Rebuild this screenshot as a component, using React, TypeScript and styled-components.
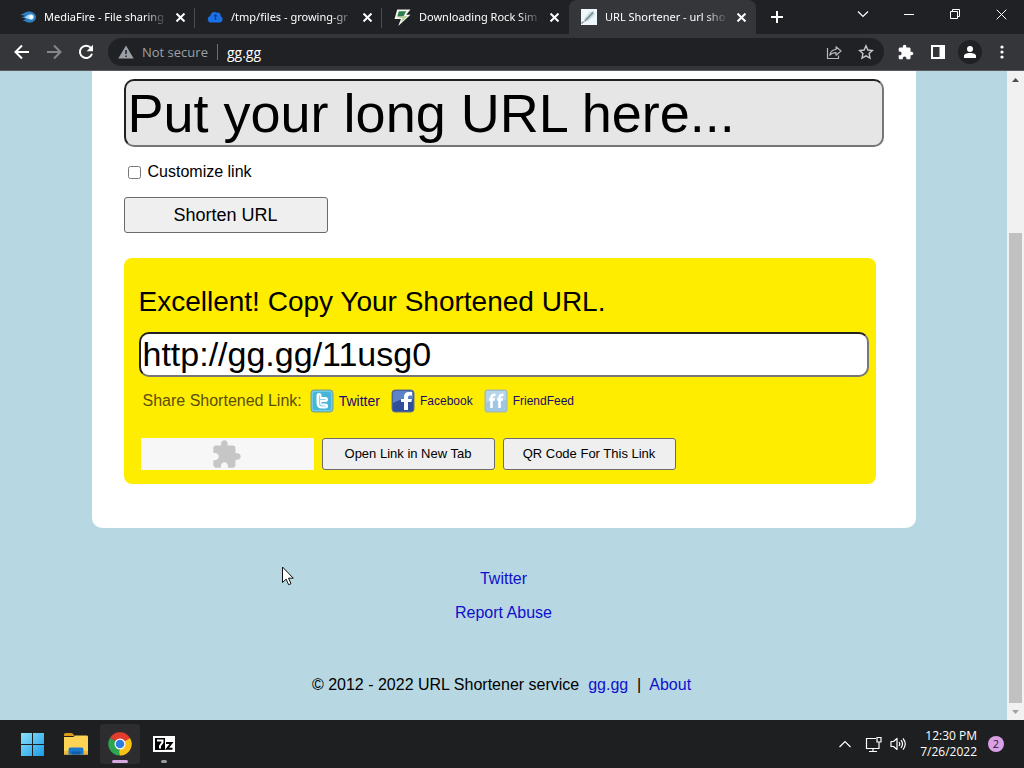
import React from "react";
import styled, { createGlobalStyle } from "styled-components";

const GlobalStyle = createGlobalStyle`
  *, *::before, *::after { box-sizing: border-box; }
  body { margin: 0; background: #b7d7e3; }
  button { font: inherit; color: inherit; }
`;

const uiFont = `"Open Sans", "Noto Sans", sans-serif`;
const tabFont = `"Noto Sans", "Open Sans", sans-serif`;
const pageFont = `"Liberation Sans", Arial, sans-serif`;

const Screen = styled.div`
  min-height: 100vh;
  display: flex;
  flex-direction: column;
  font-family: ${uiFont};
`;

/* ---------- Browser chrome ---------- */

const TabStrip = styled.div`
  display: flex;
  height: 34px;
  padding-left: 8px;
  background: #202124;
  color: #fff;
`;

const Tab = styled.div<{ $active?: boolean; $divider?: boolean }>`
  position: relative;
  flex: 0 1 187px;
  min-width: 0;
  display: flex;
  align-items: center;
  gap: 8px;
  padding: 0 7px 0 12px;
  border-radius: 8px 8px 0 0;
  background: ${(p) => (p.$active ? "#35363a" : "transparent")};

  &::after {
    content: "";
    display: ${(p) => (p.$divider ? "block" : "none")};
    position: absolute;
    right: 0;
    top: 8px;
    width: 1px;
    height: 20px;
    background: #4a4c50;
  }
`;

const TabTitle = styled.span`
  flex: 1;
  min-width: 0;
  overflow: hidden;
  white-space: nowrap;
  font-family: ${tabFont};
  font-size: 11px;
  line-height: 18px;
  mask-image: linear-gradient(to right, #000 calc(100% - 20px), rgba(0, 0, 0, 0.15));
`;

const IconButton = styled.button<{ $size?: number; $round?: boolean }>`
  flex: none;
  display: grid;
  place-items: center;
  width: ${(p) => p.$size ?? 24}px;
  height: ${(p) => p.$size ?? 24}px;
  padding: 0;
  border: 0;
  border-radius: ${(p) => (p.$round ? "50%" : "0")};
  background: ${(p) => (p.$round ? "#202124" : "transparent")};
`;

const NewTab = styled(IconButton)`
  margin: 5px 0 0 9px;
`;

const WindowButtons = styled.div`
  display: flex;
  margin-left: auto;
`;

const WindowButton = styled.button`
  width: 46px;
  height: 28px;
  padding: 0;
  border: 0;
  background: transparent;
  display: grid;
  place-items: center;
`;

const Toolbar = styled.div`
  display: flex;
  align-items: center;
  gap: 8px;
  height: 37px;
  padding: 0 10px;
  background: #35363a;
  border-bottom: 1px solid #5a5a5e;
`;

const Omnibox = styled.div`
  flex: 1;
  min-width: 0;
  display: flex;
  align-items: center;
  height: 28px;
  margin: 0 2px;
  padding: 0 6px 0 10px;
  border-radius: 14px;
  background: #202124;
  color: #9aa0a6;
  font-size: 13px;
`;

const Security = styled.span`
  display: flex;
  align-items: center;
  gap: 8px;
  padding-right: 9px;
  border-right: 1px solid #6b6d71;
  line-height: 16px;
  white-space: nowrap;
`;

const Address = styled.input`
  flex: 1;
  min-width: 0;
  padding: 0 0 0 9px;
  border: 0;
  outline: 0;
  background: transparent;
  color: #fff;
  font: 14px ${uiFont};
`;

const OmniboxActions = styled.div`
  display: flex;
  gap: 8px;
`;

/* ---------- Web page ---------- */

const Viewport = styled.div`
  position: relative;
  flex: 1;
  display: flex;
`;

const Page = styled.main`
  flex: 1;
  min-width: 0;
  background: #b7d7e3;
  color: #000;
  font: 16px/18px ${pageFont};
`;

const Card = styled.section`
  max-width: 824px;
  margin: 0 auto;
  padding: 8px 32px 44px;
  border-radius: 0 0 10px 10px;
  background: #fff;
`;

const TextField = styled.input<{ $large?: boolean }>`
  display: block;
  width: 100%;
  padding: 1px 2px;
  border: 2px inset #767676;
  border-radius: 10px;
  background: ${(p) => (p.$large ? "#e6e6e6" : "#fff")};
  color: #000;
  outline: 0;
  font: ${(p) => (p.$large ? 54 : 34)}px ${pageFont};

  &::placeholder { color: #000; opacity: 1; }
`;

const CheckRow = styled.label`
  display: flex;
  align-items: center;
  gap: 7px;
  margin: 16px 0 16px 4px;
`;

const Checkbox = styled.input`
  width: 13px;
  height: 13px;
  margin: 0;
`;

const PushButton = styled.button<{ $primary?: boolean }>`
  width: ${(p) => (p.$primary ? 204 : 173)}px;
  height: ${(p) => (p.$primary ? 36 : 32)}px;
  padding: 0;
  border: 1px solid #6b6b6b;
  border-radius: 3px;
  background: #efefef;
  color: #000;
  font-size: ${(p) => (p.$primary ? 18 : 13)}px;
`;

const Result = styled.section`
  margin: 25px 8px 0 0;
  padding: 28px 7px 14px 15px;
  border-radius: 8px;
  background: #ffed00;
`;

const ResultTitle = styled.h2`
  margin: 0 0 14px;
  font-size: 28px;
  line-height: 32px;
  font-weight: 400;
`;

const ShareRow = styled.div`
  display: flex;
  align-items: center;
  margin: 12px 0 25px 4px;
  color: #5a4f0a;
`;

const ShareLink = styled.a<{ $big?: boolean }>`
  display: flex;
  align-items: center;
  gap: 5px;
  margin-left: ${(p) => (p.$big ? 8 : 11)}px;
  color: #1a0a6b;
  font-size: ${(p) => (p.$big ? 14 : 12)}px;
  text-decoration: none;
`;

const Actions = styled.div`
  display: flex;
  flex-wrap: wrap;
  gap: 8px;
  padding-left: 2px;
`;

const PluginSlot = styled.div`
  display: grid;
  place-items: center;
  width: 173px;
  height: 32px;
  background: #f7f7f7;
`;

const Footer = styled.footer`
  display: flex;
  flex-direction: column;
  align-items: center;
  gap: 16px;
  padding: 42px 0 26px;
`;

const Copyright = styled.p`
  margin: 38px 0 0;
  padding-right: 4px;
  white-space: pre-wrap;
`;

const PageLink = styled.a`
  color: #0f10cc;
  text-decoration: none;
`;

const ScrollTrack = styled.div`
  width: 17px;
  display: flex;
  flex-direction: column;
  align-items: center;
  background: #f1f1f1;
`;

const ScrollArrow = styled.button`
  display: grid;
  place-items: center;
  width: 17px;
  height: 17px;
  padding: 0;
  border: 0;
  background: transparent;
`;

const ScrollThumb = styled.div`
  flex: 470;
  width: 13px;
  background: #c1c1c1;
`;

const ScrollGap = styled.div`
  flex: 145;
`;

const Pointer = styled.svg`
  position: absolute;
  left: 281px;
  top: 495px;
`;

/* ---------- Taskbar ---------- */

const Taskbar = styled.footer`
  display: flex;
  align-items: center;
  height: 48px;
  padding: 0 20px 0 12px;
  background: #1e1f20;
  color: #fff;
`;

const Apps = styled.div`
  display: flex;
  gap: 4px;
`;

const AppButton = styled.button<{ $active?: boolean; $running?: boolean }>`
  position: relative;
  display: grid;
  place-items: center;
  width: 40px;
  height: 40px;
  padding: 0;
  border: 0;
  border-radius: 4px;
  background: ${(p) => (p.$active ? "#2d2d2f" : "transparent")};

  &::after {
    content: "";
    display: ${(p) => (p.$active || p.$running ? "block" : "none")};
    position: absolute;
    bottom: 1px;
    left: 50%;
    width: ${(p) => (p.$active ? 16 : 6)}px;
    height: 3px;
    border-radius: 2px;
    background: ${(p) => (p.$active ? "#d5a6e0" : "#9a9a9a")};
    transform: translateX(-50%);
  }
`;

const Tray = styled.div`
  display: flex;
  align-items: center;
  margin-left: auto;
`;

const TrayIcons = styled.div`
  display: flex;
  align-items: center;
  gap: 8px;
  margin-right: 13px;
`;

const Overflow = styled(IconButton)`
  width: 16px;
  margin-right: 4px;
`;

const Clock = styled.time`
  font-size: 12px;
  line-height: 16px;
  text-align: right;
  white-space: pre-line;
`;

const Badge = styled.span`
  display: grid;
  place-items: center;
  width: 16px;
  height: 16px;
  margin-left: 11px;
  border-radius: 50%;
  background: #d9a0e6;
  color: #2b1a30;
  font-size: 11px;
  line-height: 16px;
`;

/* ---------- Icons ---------- */

const CloseIcon = ({ size = 9, stroke = 2 }: { size?: number; stroke?: number }) => (
  <svg width={size} height={size} viewBox="0 0 8 8" fill="none" stroke="#fff" strokeWidth={(stroke * 8) / size}>
    <path d="M.5.5l7 7M7.5.5l-7 7" />
  </svg>
);

const MediaFireIcon = () => (
  <svg width="16" height="16" viewBox="0 0 16 16">
    <path d="M0 5.200C3 5.600 4.600 2.400 9 2.400c4 0 7 2.500 7 5.700s-2.800 5.600-6.600 5.600c-3.300 0-4.200-2.200-7.200-2.400 2.300-.5 3-.8 4-1.500C4.600 9 3 8.600.8 8.700 3 8 4 7.600 5 6.800 3.500 6.300 1.600 6 0 5.200z" fill="#2f7fc4" />
    <path d="M4 8.600C6.500 7.600 7.500 5.200 11 5.200a2.700 2.700 0 0 1 0 5.500C8.900 10.700 7.400 8.900 4 8.600z" fill="#a9dcf8" />
    <circle cx="11.300" cy="8" r="1.900" fill="#fff" />
  </svg>
);

const CloudIcon = () => (
  <svg width="16" height="16" viewBox="0 0 16 16">
    <path d="M4.300 13.500A3.300 3.300 0 0 1 3.300 7C3.500 4.500 5.300 3 7.500 3c1 0 1.700.2 2.400.7C12.500 3.200 13.800 5 13.800 7.200c2.500 1 2.400 6.300-1.100 6.300z" fill="#1a70e6" />
    <path d="M8.500 6v5M7.300 7.300L8.500 6l1.200 1.300" stroke="#0d3c94" strokeWidth="1.300" fill="none" />
  </svg>
);

const BoltIcon = () => (
  <svg width="17" height="17" viewBox="0 0 16 16">
    <path d="M3 .5H15.500L11.500 5.500H15.500L4 16 6.500 9.500H.5z" fill="#f4f7ee" />
    <path d="M4.600 2H11.500L8.800 7H3z" fill="#2e7d4c" />
    <path d="M9 6.500h4L6 13 8 8.500H3z" fill="#b7d39a" />
  </svg>
);

const LinkPageIcon = () => (
  <svg width="16" height="16" viewBox="0 0 16 16">
    <rect width="16" height="16" fill="#eef7fb" />
    <path d="M3 10l6-7 4-1 .5 3.500L7 12z" fill="#c0d3da" />
    <path d="M.5 14.500l2-2M3.500 12.500L12 3.500" stroke="#74868e" strokeWidth="1.200" fill="none" />
    <path d="M6 6.500l3-3.500M11 9l2.500-3" stroke="#dceaf0" fill="none" />
  </svg>
);

const ArrowIcon = ({ flip = false }: { flip?: boolean }) => (
  <svg width="16" height="16" viewBox="0 0 16 16" fill="none" stroke={flip ? "#85878a" : "#fff"} strokeWidth="2">
    {flip ? <path d="M1 8h13M8 1.500L14.500 8 8 14.500" /> : <path d="M15 8H2M8 1.500L1.500 8 8 14.500" />}
  </svg>
);

const ReloadIcon = () => (
  <svg width="16" height="16" viewBox="0 0 16 16">
    <path d="M13 4A6.200 6.200 0 1 0 14 9.800" fill="none" stroke="#fff" strokeWidth="2" />
    <path d="M15 .8v6.400H8.600z" fill="#fff" />
  </svg>
);

const WarningIcon = () => (
  <svg width="16" height="14" viewBox="0 0 16 14">
    <path d="M8 .5L15.700 13.500H.3z" fill="#9aa0a6" />
    <path d="M8 5v4M8 10.500v1.500" stroke="#202124" strokeWidth="1.500" />
  </svg>
);

const ShareIcon = () => (
  <svg width="16" height="16" viewBox="0 0 16 16" fill="none" stroke="#b5b8bc" strokeWidth="1.200">
    <path d="M1.500 4v10.500H12.500V11.500" />
    <path d="M3.800 11.200C4.300 7.700 6.300 5.800 10 5.500V2.800L15 7l-5 4.200V8.600C7 8.600 5.300 9.300 3.800 11.200z" strokeLinejoin="round" />
  </svg>
);

const StarIcon = () => (
  <svg width="16" height="16" viewBox="0 0 16 16" fill="none" stroke="#c5c8cb" strokeWidth="1.400">
    <path d="M8 1.800l1.900 4.200 4.500.5-3.300 3.100.9 4.600L8 11.900l-4 2.300.9-4.600L1.600 6.500 6.100 6z" />
  </svg>
);

const PuzzleIcon = ({ size, color }: { size: number; color: string }) => (
  <svg width={size} height={size} viewBox="1 0 23 23" fill={color}>
    <path d="M20.500 11H19V7c0-1.100-.9-2-2-2h-4V3.500C13 2.120 11.880 1 10.500 1S8 2.120 8 3.500V5H4c-1.100 0-1.990.9-1.990 2v3.800H3.500c1.490 0 2.700 1.210 2.700 2.700s-1.210 2.700-2.700 2.700H2V20c0 1.100.9 2 2 2h3.800v-1.500c0-1.490 1.210-2.700 2.700-2.700s2.700 1.210 2.700 2.700V22H17c1.100 0 2-.9 2-2v-4h1.500c1.380 0 2.500-1.120 2.500-2.500S21.880 11 20.500 11z" />
  </svg>
);

const SidePanelIcon = () => (
  <svg width="14" height="14" viewBox="0 0 14 14">
    <rect x="1" y="1" width="12" height="12" fill="none" stroke="#fff" strokeWidth="2" />
    <path d="M8.500 1H13v12H8.500z" fill="#fff" />
  </svg>
);

const PersonIcon = () => (
  <svg width="12" height="12" viewBox="0 0 12 12" fill="#fff">
    <circle cx="6" cy="3" r="3" />
    <path d="M0 12V10c0-2 2.500-3 6-3s6 1 6 3v2z" />
  </svg>
);

const MenuIcon = () => (
  <svg width="4" height="14" viewBox="0 0 4 14" fill="#fff">
    <circle cx="2" cy="2" r="1.600" /><circle cx="2" cy="7" r="1.600" /><circle cx="2" cy="12" r="1.600" />
  </svg>
);

const SocialTwitter = () => (
  <svg width="24" height="24" viewBox="0 0 24 24">
    <rect x="1" y="1" width="22" height="22" rx="3" fill="#6fcbe6" stroke="#7a9c80" />
    <rect x="3" y="3" width="18" height="18" rx="2" fill="#45b5da" />
    <path d="M9 6.500v7.500c0 2 1.200 3 3 3H15.500M9.500 10.500H15.500" fill="none" stroke="#fff" strokeWidth="5" strokeLinecap="round" strokeLinejoin="round" />
    <path d="M9.500 6.500v7.500c0 1.800 1 3 2.800 3H15.500M9.500 10.500H15.500" fill="none" stroke="#8fd2ea" strokeWidth="1.200" />
  </svg>
);

const SocialFacebook = () => (
  <svg width="24" height="24" viewBox="0 0 24 24">
    <rect x="1" y="1" width="22" height="22" rx="3" fill="#2f4f9a" stroke="#6d7489" />
    <path d="M2 4a2 2 0 0 1 2-2h16a2 2 0 0 1 2 2v6c-6-1-14 0-20 4z" fill="#5f83c8" />
    <path d="M13 21v-8h-3v-3h3V8c0-3 1.500-5 4.500-5H21v3.500h-2c-1.400 0-2 .6-2 2V10h4l-.6 3H17v8z" fill="#fff" />
  </svg>
);

const SocialFriendFeed = () => (
  <svg width="24" height="24" viewBox="0 0 24 24">
    <rect x="1" y="1" width="22" height="22" rx="2" fill="#9fc6e4" stroke="#a6b6a5" />
    <path d="M2 2h20v9C15 9 8 10 2 14z" fill="#b5d5ed" />
    <path d="M7.500 19V8.500C7.500 6.500 9 5.500 11.500 6M5 10.500h6M15.500 19V8.500c0-2 1.500-3 4-2.500M13 10.500h6" fill="none" stroke="#fff" strokeWidth="2.600" />
  </svg>
);

const WindowsIcon = () => (
  <svg width="24" height="24" viewBox="0 0 24 24">
    <defs>
      <linearGradient id="win" x1="0" y1="0" x2="1" y2="1">
        <stop offset="0" stopColor="#8be0fb" /><stop offset="1" stopColor="#1b9ce8" />
      </linearGradient>
    </defs>
    <path d="M1 1H12V12H1zM13 1H24V12H13zM1 13H12V24H1zM13 13H24V24H13z" fill="url(#win)" />
  </svg>
);

const FolderIcon = () => (
  <svg width="26" height="24" viewBox="0 0 26 24">
    <path d="M1 2.500A1.500 1.500 0 0 1 2.500 1H9l3 3H1z" fill="#d99a17" />
    <path d="M1 5h9l2.500-1.500H24A1.500 1.500 0 0 1 25 5v17.500H1z" fill="#fcd354" />
    <path d="M1 19h24v3.500H1z" fill="#f0b83a" />
    <path d="M5.500 22.500v-5a2 2 0 0 1 2-2h11a2 2 0 0 1 2 2v5z" fill="#1879cf" />
    <path d="M8.500 19.500h9v3h-9z" fill="#125da8" />
  </svg>
);

const ChromeIcon = () => (
  <svg width="24" height="24" viewBox="0 0 24 24">
    <path d="M12 12L2 6A11.500 11.500 0 0 1 22 6z" fill="#e33b2e" />
    <path d="M12 12L22 6a11.500 11.500 0 0 1-10 17.500z" fill="#fbc116" />
    <path d="M12 12v11.500A11.500 11.500 0 0 1 2 6z" fill="#2da44e" />
    <path d="M16.800 14.700L12 23.500l-1-4 2-3z" fill="#fbc116" />
    <path d="M2 6l5.200 8.800L8 10z" fill="#2da44e" />
    <circle cx="12" cy="12" r="5.500" fill="#fff" />
    <circle cx="12" cy="12" r="4.300" fill="#2d7de0" />
  </svg>
);

const SevenZipIcon = () => (
  <svg width="22" height="16" viewBox="0 0 22 16">
    <rect width="22" height="16" fill="#fff" />
    <rect x="2" y="2" width="10" height="12" fill="#000" />
    <path d="M4 4.500h5.500v2L7 10v2.500" fill="none" stroke="#fff" strokeWidth="2" />
    <path d="M13 7h5.500L14 12.800h5.500" fill="none" stroke="#000" strokeWidth="2" />
  </svg>
);

const ChevronIcon = ({ up = false }: { up?: boolean }) => (
  <svg width="12" height="8" viewBox="0 0 12 8" fill="none" stroke="#fff" strokeWidth="1.200">
    <path d={up ? "M.5 7L6 1.500 11.500 7" : "M1 1.500l5 5 5-5"} />
  </svg>
);

const NetworkIcon = () => (
  <svg width="17" height="17" viewBox="0 0 17 17" fill="none" stroke="#fff" strokeWidth="1.200">
    <path d="M11 2.500H1.500v10H14V9M4 15.500h8M8 12.500v3" />
    <path d="M12 1.500h4V6h-4zM14 6v3" />
  </svg>
);

const SpeakerIcon = () => (
  <svg width="17" height="16" viewBox="0 0 17 16" fill="none" stroke="#fff" strokeWidth="1.200">
    <path d="M1 5.500h2.500L7 2.500v11L3.500 10.500H1z" strokeLinejoin="round" />
    <path d="M9 6q1.500 2 0 4M11 4.200q3 3.800 0 7.600M13 2.500q4.500 5.500 0 11" />
  </svg>
);

const tabs = [
  { title: "MediaFire - File sharing", icon: <MediaFireIcon />, divider: true },
  { title: "/tmp/files - growing-gr", icon: <CloudIcon />, divider: true },
  { title: "Downloading Rock Sim", icon: <BoltIcon /> },
  { title: "URL Shortener - url sho", icon: <LinkPageIcon />, active: true },
];

export default function App() {
  return (
    <Screen>
      <GlobalStyle />
      <TabStrip>
        {tabs.map((t) => (
          <Tab key={t.title} $active={t.active} $divider={t.divider}>
            {t.icon}
            <TabTitle>{t.title}</TabTitle>
            <IconButton $size={16} aria-label="Close tab"><CloseIcon /></IconButton>
          </Tab>
        ))}
        <NewTab aria-label="New tab">
          <svg width="12" height="12" viewBox="0 0 12 12" stroke="#fff" strokeWidth="2"><path d="M6 0v12M0 6h12" /></svg>
        </NewTab>
        <WindowButtons>
          <WindowButton aria-label="Search tabs"><ChevronIcon /></WindowButton>
          <WindowButton aria-label="Minimize">
            <svg width="10" height="1"><rect width="10" height="1" fill="#fff" /></svg>
          </WindowButton>
          <WindowButton aria-label="Restore">
            <svg width="10" height="10" viewBox="0 0 10 10" fill="none" stroke="#fff"><path d="M.5 2.500h7v7h-7zM2.500 2.500v-2h7v7h-2" /></svg>
          </WindowButton>
          <WindowButton aria-label="Close"><CloseIcon size={11} stroke={1} /></WindowButton>
        </WindowButtons>
      </TabStrip>

      <Toolbar>
        <IconButton aria-label="Back"><ArrowIcon /></IconButton>
        <IconButton aria-label="Forward"><ArrowIcon flip /></IconButton>
        <IconButton aria-label="Reload"><ReloadIcon /></IconButton>
        <Omnibox>
          <Security><WarningIcon />Not secure</Security>
          <Address aria-label="Address" defaultValue="gg.gg" />
          <OmniboxActions>
            <IconButton aria-label="Share"><ShareIcon /></IconButton>
            <IconButton aria-label="Bookmark"><StarIcon /></IconButton>
          </OmniboxActions>
        </Omnibox>
        <IconButton aria-label="Extensions"><PuzzleIcon size={16} color="#fff" /></IconButton>
        <IconButton aria-label="Side panel"><SidePanelIcon /></IconButton>
        <IconButton $round aria-label="Profile"><PersonIcon /></IconButton>
        <IconButton aria-label="Menu"><MenuIcon /></IconButton>
      </Toolbar>

      <Viewport>
        <Page>
          <Card>
            <TextField $large aria-label="Long URL" placeholder="Put your long URL here..." />
            <CheckRow><Checkbox type="checkbox" />Customize link</CheckRow>
            <PushButton $primary>Shorten URL</PushButton>
            <Result>
              <ResultTitle>Excellent! Copy Your Shortened URL.</ResultTitle>
              <TextField aria-label="Shortened URL" defaultValue="http://gg.gg/11usg0" />
              <ShareRow>
                Share Shortened Link:
                <ShareLink $big href="#twitter"><SocialTwitter />Twitter</ShareLink>
                <ShareLink href="#facebook"><SocialFacebook />Facebook</ShareLink>
                <ShareLink href="#friendfeed"><SocialFriendFeed />FriendFeed</ShareLink>
              </ShareRow>
              <Actions>
                <PluginSlot><PuzzleIcon size={30} color="#c6c6c6" /></PluginSlot>
                <PushButton>Open Link in New Tab</PushButton>
                <PushButton>QR Code For This Link</PushButton>
              </Actions>
            </Result>
          </Card>
          <Footer>
            <PageLink href="#twitter-page">Twitter</PageLink>
            <PageLink href="#abuse">Report Abuse</PageLink>
            <Copyright>
              {"© 2012 - 2022 URL Shortener service  "}
              <PageLink href="#home">gg.gg</PageLink>
              {"  |  "}
              <PageLink href="#about">About</PageLink>
            </Copyright>
          </Footer>
        </Page>
        <ScrollTrack>
          <ScrollArrow aria-label="Scroll up">
            <svg width="7" height="4"><path d="M0 4L3.500 0 7 4z" fill="#505050" /></svg>
          </ScrollArrow>
          <ScrollGap />
          <ScrollThumb />
          <ScrollArrow aria-label="Scroll down">
            <svg width="7" height="4"><path d="M0 0h7L3.500 4z" fill="#a3a3a3" /></svg>
          </ScrollArrow>
        </ScrollTrack>
        <Pointer width="14" height="20" viewBox="0 0 14 20">
          <path d="M1.500 1v15.500l3.600-3.400 2.500 5.600 2.400-1-2.500-5.500h4.800z" fill="#fff" stroke="#111" />
        </Pointer>
      </Viewport>

      <Taskbar>
        <Apps>
          <AppButton aria-label="Start"><WindowsIcon /></AppButton>
          <AppButton aria-label="File Explorer"><FolderIcon /></AppButton>
          <AppButton $active aria-label="Chrome"><ChromeIcon /></AppButton>
          <AppButton $running aria-label="7-Zip"><SevenZipIcon /></AppButton>
        </Apps>
        <Tray>
          <TrayIcons>
            <Overflow aria-label="Show hidden icons"><ChevronIcon up /></Overflow>
            <NetworkIcon />
            <SpeakerIcon />
          </TrayIcons>
          <Clock>{"12:30 PM\n7/26/2022"}</Clock>
          <Badge>2</Badge>
        </Tray>
      </Taskbar>
    </Screen>
  );
}
